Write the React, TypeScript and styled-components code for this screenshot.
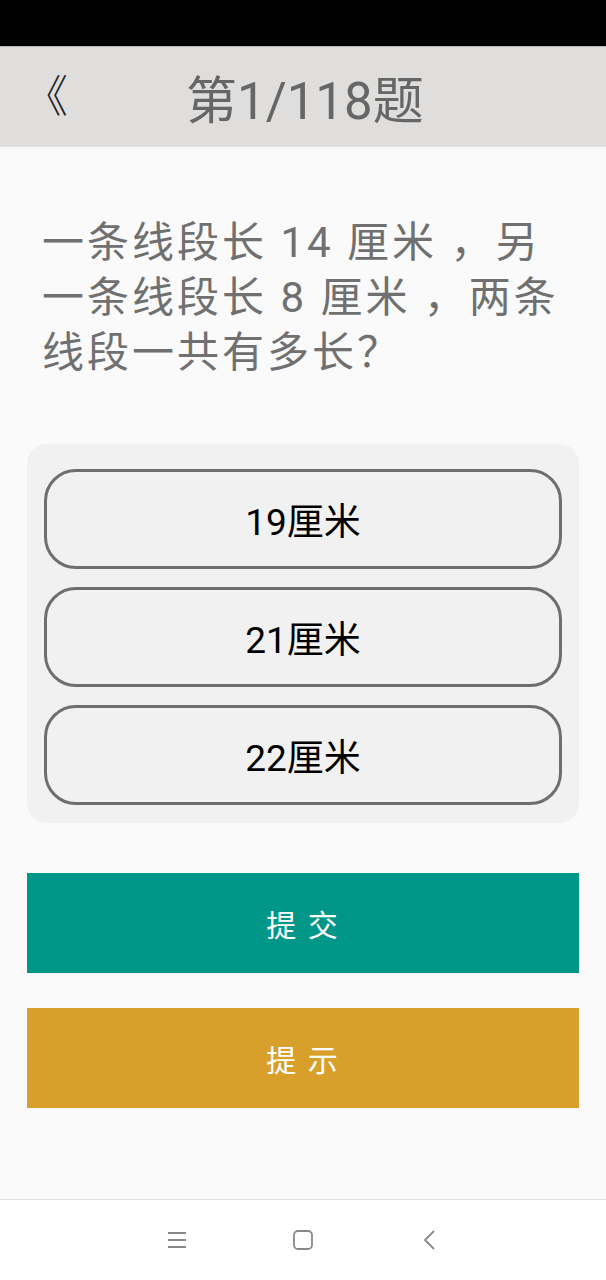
import styled, { createGlobalStyle } from "styled-components";
import { useState } from "react";

const question = "一条线段长 14 厘米 ，另一条线段长 8 厘米 ，两条线段一共有多长？";
const options = ["19厘米", "21厘米", "22厘米"];

const App = () => {
  const [selected, setSelected] = useState<number | null>(null);

  return (
    <>
      <GlobalStyle />
      <Screen>
        <StatusBar />
        <Header>
          <BackButton type="button">《</BackButton>
          <Title>第1/118题</Title>
        </Header>
        <Content>
          <Question>{question}</Question>
          <OptionPanel>
            {options.map((text, i) => (
              <Option
                key={text}
                type="button"
                $active={selected === i}
                onClick={() => setSelected(i)}
              >
                {text}
              </Option>
            ))}
          </OptionPanel>
          <ActionButton type="button" $color="#009688">
            提 交
          </ActionButton>
          <ActionButton type="button" $color="#d89f2b">
            提 示
          </ActionButton>
        </Content>
        <NavBar>
          <NavIcon viewBox="0 0 20 18">
            <path d="M1 2h18M1 9h18M1 16h18" />
          </NavIcon>
          <NavIcon viewBox="0 0 20 20">
            <rect x="1" y="1" width="18" height="18" rx="4" />
          </NavIcon>
          <NavIcon viewBox="0 0 12 20">
            <path d="M11 1L2 10l9 9" />
          </NavIcon>
        </NavBar>
      </Screen>
    </>
  );
};

export default App;

const GlobalStyle = createGlobalStyle`
  body {
    margin: 0;
    background: #fafafa;
    font-family: Roboto, "Noto Sans CJK SC", sans-serif;
  }
  button {
    font-family: inherit;
    cursor: pointer;
  }
`;
const Screen = styled.div`
  display: flex;
  flex-direction: column;
  width: 606px;
  height: 1280px;
  background: #fafafa;
`;
const StatusBar = styled.div`
  height: 46px;
  background: #000;
`;
const Header = styled.header`
  display: flex;
  align-items: center;
  height: 101px;
  padding-left: 24px;
  box-sizing: border-box;
  background: #dfdedd;
  border-top: 1px solid #b9b9b9;
`;
const BackButton = styled.button`
  padding: 0;
  border: none;
  background: none;
  color: #222;
  font-size: 44px;
  line-height: 1;
  font-weight: 300;
`;
const Title = styled.h1`
  margin: 0 0 0 118px;
  font-size: 51px;
  font-weight: 400;
  color: #666;
`;
const Content = styled.main`
  flex: 1;
  display: flex;
  flex-direction: column;
  padding: 68px 27px 0;
`;
const Question = styled.p`
  margin: 0 0 64px;
  padding: 0 15px;
  font-size: 42px;
  line-height: 55px;
  letter-spacing: 3px;
  color: #707070;
`;
const OptionPanel = styled.div`
  display: flex;
  flex-direction: column;
  gap: 18px;
  padding: 25px 17px 18px;
  margin-bottom: 50px;
  border-radius: 20px;
  background: #f1f1f1;
`;
const Option = styled.button<{ $active: boolean }>`
  height: 100px;
  border: 3px solid ${(p) => (p.$active ? "#009688" : "#6e6e6e")};
  border-radius: 32px;
  background: #f1f1f1;
  color: #000;
  font-size: 37px;
`;
const ActionButton = styled.button<{ $color: string }>`
  height: 100px;
  margin-bottom: 35px;
  border: none;
  background: ${(p) => p.$color};
  color: #fff;
  font-size: 30px;
  letter-spacing: 2px;
`;
const NavBar = styled.nav`
  display: flex;
  align-items: center;
  justify-content: center;
  gap: 106px;
  height: 80px;
  border-top: 1px solid #e2e2e2;
  background: #fff;
`;
const NavIcon = styled.svg`
  width: 20px;
  height: 20px;
  fill: none;
  stroke: #888;
  stroke-width: 1.8;
`;
